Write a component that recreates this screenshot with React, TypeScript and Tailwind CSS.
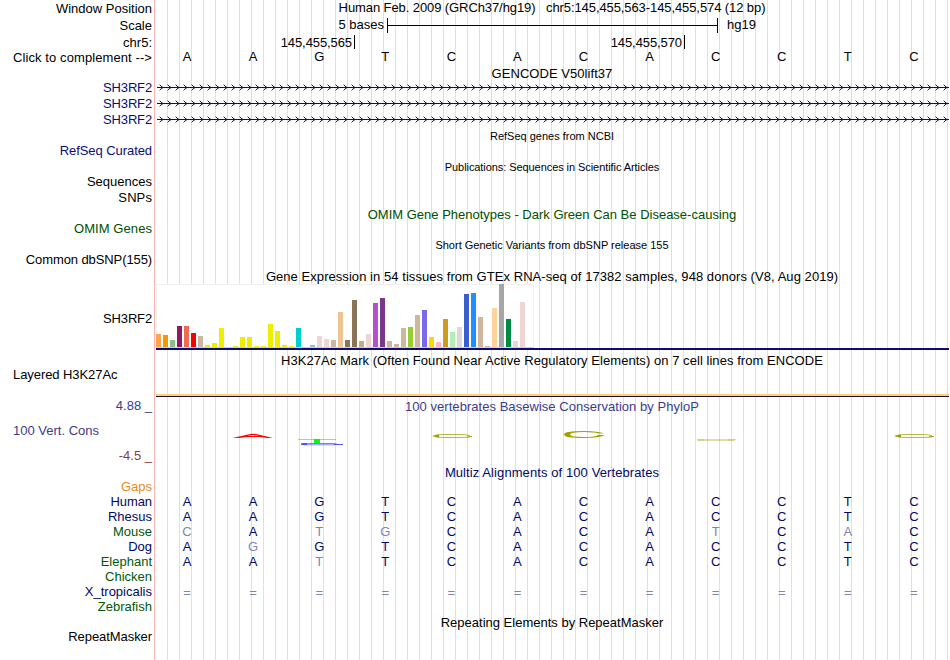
import clsx from "clsx";

type TLabel = { text: string; className: string };

const labels: TLabel[] = [
    { text: "Window Position", className: "mt-px" },
    { text: "Scale", className: "mt-px" },
    { text: "chr5:", className: "mt-px" },
    { text: "Click to complement -->", className: "-mt-px tracking-[0.09px]" },
    { text: "SH3RF2", className: "mt-[14px] tracking-[-0.15px] text-[#0c0c78]" },
    { text: "SH3RF2", className: "tracking-[-0.15px] text-[#0c0c78]" },
    { text: "SH3RF2", className: "tracking-[-0.15px] text-[#0c0c78]" },
    { text: "RefSeq Curated", className: "mt-[15px] tracking-[-0.07px] text-[#0c0c78]" },
    { text: "Sequences", className: "mt-[15px]" },
    { text: "SNPs", className: "tracking-[0.1px]" },
    { text: "OMIM Genes", className: "mt-[15px] tracking-[0.07px] text-[#005000]" },
    { text: "Common dbSNP(155)", className: "mt-[15px] tracking-[-0.1px]" },
    { text: "SH3RF2", className: "mt-[43px] tracking-[-0.15px]" },
    { text: "Layered H3K27Ac", className: "mt-[40px] pl-[13px] self-start tracking-[-0.07px]" },
    { text: "4.88 _", className: "mt-[15px] text-[#3c3c8c]" },
    { text: "100 Vert. Cons", className: "mt-[9px] pl-[13px] self-start text-[#3c3c8c]" },
    { text: "-4.5 _", className: "mt-[9px] text-[#8c3c3c]" },
    { text: "Gaps", className: "mt-[15px] text-[#e68c14]" },
    { text: "Human", className: "-mt-px tracking-[-0.1px] text-[#000a64]" },
    { text: "Rhesus", className: "-mt-px text-[#000a64]" },
    { text: "Mouse", className: "-mt-px text-[#005a0a]" },
    { text: "Dog", className: "-mt-px text-[#000a64]" },
    { text: "Elephant", className: "-mt-px text-[#005a0a]" },
    { text: "Chicken", className: "-mt-px text-[#005a0a]" },
    { text: "X_tropicalis", className: "-mt-px text-[#000a64]" },
    { text: "Zebrafish", className: "-mt-px text-[#005a0a]" },
    { text: "RepeatMasker", className: "mt-[14px] tracking-[-0.07px]" },
];

// [height, colour] for each of the 54 GTEx tissues
const tissues: [number, string][] = [
    [13, "#ffa54f"], [12, "#ee9a00"], [7, "#8fbc8f"], [21, "#8b1c62"], [21, "#ee6a50"], [14, "#ff0000"],
    [11, "#cdb79e"], [2, "#eeee00"], [4, "#eeee00"], [19, "#eeee00"], [0, "#eeee00"], [1, "#eeee00"],
    [10, "#eeee00"], [10, "#eeee00"], [1, "#eeee00"], [1, "#eeee00"], [23, "#eeee00"], [16, "#eeee00"],
    [2, "#eeee00"], [1, "#eeee00"], [19, "#00cdcd"], [0, "#ee82ee"], [2, "#9ac0cd"], [11, "#eed5d2"],
    [8, "#eed5d2"], [7, "#cdb79e"], [35, "#eec591"], [7, "#8b7355"], [47, "#8b7355"], [6, "#cdaa7d"],
    [13, "#eed5d2"], [44, "#b452cd"], [49, "#7a378b"], [6, "#cdb79e"], [3, "#cdb79e"], [19, "#cdb79e"],
    [20, "#9acd32"], [32, "#cdb79e"], [37, "#7a67ee"], [10, "#ffd700"], [5, "#ffb6c1"], [28, "#cd9b1d"],
    [15, "#b4eeb4"], [20, "#d9d9d9"], [53, "#3a5fcd"], [54, "#1e90ff"], [30, "#cdb79e"], [1, "#cdb79e"],
    [39, "#ffd39b"], [63, "#a6a6a6"], [28, "#008b45"], [6, "#eed5d2"], [45, "#eed5d2"], [0, "#ff00ff"],
];

const human = "AAGTCACACCTC";
const alignments = [
    human,
    human,
    "CATGCACATCAC",
    "AGGTCACACCTC",
    "AATTCACACCTC",
    "",
    "============",
];

function Title({ text, className }: TLabel) {
    return <h2 className={clsx("h-4 pr-px text-center leading-4 whitespace-pre", className)}>{text}</h2>;
}

function Bases({ seq, className }: { seq: string; className?: string }) {
    return (
        <div className={clsx("flex h-4 w-[793px] leading-4", className)}>
            {seq.split("").map((base, i) => (
                <span
                    key={i}
                    className={clsx(
                        "w-[66.08px] pr-[4px] text-center",
                        base === "=" && "pt-px",
                        seq !== human && base !== human[i] && "text-[#8084b1]"
                    )}
                >
                    {base}
                </span>
            ))}
        </div>
    );
}

function Transcript() {
    return (
        <svg className="block h-4 w-[793px]" viewBox="0 0 793 16" fill="none" stroke="#0c0c78" shapeRendering="crispEdges">
            <path d="M1 8.5H793" />
            {Array.from({ length: 99 }, (_, i) => (
                <g key={i} transform={`translate(${3 + i * 8} 0)`}>
                    <path d="M2 7.5h1M1 6.5h1M2 9.5h1M1 10.5h1" />
                    <path d="M0 5.5h1M0 11.5h1M3 7.5h1M3 9.5h1" strokeOpacity=".35" />
                </g>
            ))}
        </svg>
    );
}

function Conservation() {
    return (
        <svg className="block h-[50px] w-[793px]" viewBox="156 415 793 50">
            <path d="M232.500 438L248 434.500Q253 433 258 434.500L273 438H267L260 436.900H246L239 438ZM247 436H259L253 434.900Z" fill="#f00" fillRule="evenodd" />
            <path d="M298 439.500h38" stroke="#0f0" strokeOpacity=".6" />
            <path d="M314 439h6v4h-6z" fill="#0f0" />
            <path d="M303 443h31l4 1h-37z" fill="#00f" fillOpacity=".5" />
            <path d="M301 444h42v.8h-42z" fill="#00f" fillOpacity=".45" />
            <path d="M301 443.500h6v1.200h-6zM334 444h9v.8h-9z" fill="#00f" fillOpacity=".7" />
            <path d="M303 445.500h32" stroke="#a0a000" strokeOpacity=".25" />
            {[452, 914].map((x) => (
                <g key={x} transform={`translate(${x} 436)`} fill="none" stroke="#a0a000">
                    <path d="M18 -.3Q15 -1.500 8 -1.500H-8Q-15 -1.300 -15 0Q-15 1.500 -8 1.500H10Q17 1.500 20 .5H15" strokeOpacity=".75" />
                    <path d="M-20 0L-15 -1.500H-13V1.500H-15Z" fill="#a0a000" stroke="none" />
                </g>
            ))}
            <path
                d="M604 433.500H598Q595 432 584 432Q570 432 570 434.500Q570 437 584 437Q596 437 598 435H605Q600 438 584 438Q564 438 564 434.500Q564 431 584 431Q599 431 604 433.500Z"
                fill="#a0a000"
            />
            <path d="M697 439h38l2 1h-2l-2 1h-34l-2 -.5z" fill="#a0a000" fillOpacity=".35" />
            <path d="M698 440h6M728 440h7" stroke="#a0a000" strokeOpacity=".4" />
        </svg>
    );
}

export default function App() {
    return (
        <main className="flex h-[660px] w-[950px] overflow-hidden bg-white text-[13px] text-black [font-family:'Liberation_Sans',Arial,sans-serif]">
            <aside className="flex w-[155px] shrink-0 flex-col items-end border-r border-[#ffb4b4] pr-[2px]">
                {labels.map((label, i) => (
                    <span key={i} className={clsx("h-4 shrink-0 leading-4 whitespace-pre", label.className)}>{label.text}</span>
                ))}
            </aside>
            <section className="ml-px w-[793px] shrink-0 bg-[repeating-linear-gradient(to_right,transparent_0_11px,#dcdcff_11px_12px)]">
                <Title text="Human Feb. 2009 (GRCh37/hg19)   chr5:145,455,563-145,455,574 (12 bp)" className="tracking-[-0.09px]" />
                <div className="mt-px flex h-4 items-center leading-4">
                    <span className="w-[231px] pr-[3px] text-right">5 bases</span>
                    <span className="flex h-[15px] w-[331px] items-center border-x border-black"><i className="h-px w-full bg-black" /></span>
                    <span className="pl-[9px]">hg19</span>
                </div>
                <div className="mt-[2px] flex h-4 leading-4 tracking-[-0.09px]">
                    <span className="h-[14px] w-[199px] border-r border-black pr-[2px] text-right">145,455,565</span>
                    <span className="h-[14px] w-[330px] border-r border-black pr-[2px] text-right">145,455,570</span>
                </div>
                <Bases seq={human} className="-mt-[2px]" />
                <Title text="GENCODE V50lift37" className="mt-px tracking-[0.05px]" />
                <div className="-mt-[3px]"><Transcript /><Transcript /><Transcript /></div>
                <Title text="RefSeq genes from NCBI" className="mt-px text-[11px]" />
                <Title text="Publications: Sequences in Scientific Articles" className="mt-[15px] text-[11px] tracking-[-0.07px]" />
                <Title text="OMIM Gene Phenotypes - Dark Green Can Be Disease-causing" className="mt-[32px] text-[#005000]" />
                <Title text="Short Genetic Variants from dbSNP release 155" className="mt-[14px] text-[11px]" />
                <Title text="Gene Expression in 54 tissues from GTEx RNA-seq of 17382 samples, 948 donors (V8, Aug 2019)" className="mt-[16px] tracking-[0.055px]" />
                <div className="-mt-px flex h-16 w-[378px] items-end gap-[2px] border-b border-[#d0d0d0] bg-white shadow-[inset_1px_1px_#f0f0f0,inset_-1px_0_#f0f0f0]">
                    {tissues.map(([height, color], i) => (
                        <span key={i} className="w-[5px] shrink-0" style={{ height, backgroundColor: color }} />
                    ))}
                </div>
                <div className="h-[2px] bg-[#0c0c78]" />
                <Title text="H3K27Ac Mark (Often Found Near Active Regulatory Elements) on 7 cell lines from ENCODE" className="mt-[3px] tracking-[0.05px]" />
                <div className="mt-[25px] h-[3px] border-b border-[#200c20] bg-[#ffcf80]" />
                <Title text="100 vertebrates Basewise Conservation by PhyloP" className="mt-[2px] tracking-[0.04px] text-[#3c3c8c]" />
                <Conservation />
                <Title text="Multiz Alignments of 100 Vertebrates" className="tracking-[0.09px] text-[#000a64]" />
                <div className="mt-[13px]">
                    {alignments.map((seq, i) => (
                        <Bases key={i} seq={seq} className="-mb-px text-[#000a64]" />
                    ))}
                </div>
                <Title text="Repeating Elements by RepeatMasker" className="mt-[16px]" />
            </section>
        </main>
    );
}
